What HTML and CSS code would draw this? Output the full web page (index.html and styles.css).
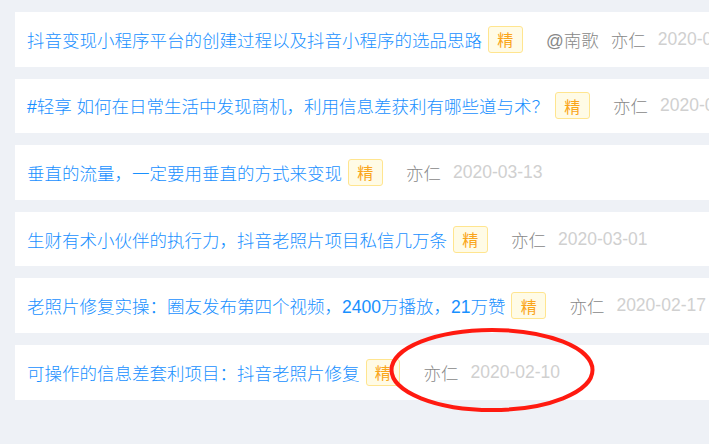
FILE: index.html
```html
<!DOCTYPE html>
<html lang="zh-CN">
<head>
    <meta charset="UTF-8">
    <meta name="viewport" content="width=device-width, initial-scale=1.0">
    <title>精华帖子</title>
    <link rel="stylesheet" href="styles.css">
</head>
<body>
    <div class="topic-list">
        <div class="topic">
            <a class="topic-title" href="#">抖音变现小程序平台的创建过程以及抖音小程序的选品思路</a>
            <span class="tag">精</span>
            <span class="author">@南歌</span>
            <span class="author">亦仁</span>
            <span class="date">2020-03-20</span>
        </div>
        <div class="topic">
            <a class="topic-title" href="#">#轻享 如何在日常生活中发现商机，利用信息差获利有哪些道与术？</a>
            <span class="tag">精</span>
            <span class="author">亦仁</span>
            <span class="date">2020-03-15</span>
        </div>
        <div class="topic">
            <a class="topic-title" href="#">垂直的流量，一定要用垂直的方式来变现</a>
            <span class="tag">精</span>
            <span class="author">亦仁</span>
            <span class="date">2020-03-13</span>
        </div>
        <div class="topic">
            <a class="topic-title" href="#">生财有术小伙伴的执行力，抖音老照片项目私信几万条</a>
            <span class="tag">精</span>
            <span class="author">亦仁</span>
            <span class="date">2020-03-01</span>
        </div>
        <div class="topic">
            <a class="topic-title" href="#">老照片修复实操：圈友发布第四个视频，2400万播放，21万赞</a>
            <span class="tag">精</span>
            <span class="author">亦仁</span>
            <span class="date">2020-02-17</span>
        </div>
        <div class="topic">
            <a class="topic-title" href="#">可操作的信息差套利项目：抖音老照片修复</a>
            <span class="tag">精</span>
            <span class="author">亦仁</span>
            <span class="date">2020-02-10</span>
        </div>
    </div>

    <!-- red marker drawn over the last row -->
    <svg class="marker" width="206" height="86" viewBox="0 0 206 86">
        <ellipse cx="103" cy="43" rx="100.5" ry="40" fill="none" stroke="#ff1a10" stroke-width="4"/>
    </svg>
</body>
</html>
```

FILE: styles.css
```css
body {
    margin: 0;
    padding: 0;
    background-color: #eef1f6;
    font-family: "Liberation Sans", "Noto Sans CJK SC", sans-serif;
    font-size: 17.5px;
    font-weight: 300;
    overflow: hidden;
    position: relative;
    height: 444px;
}
.topic-list {
    padding: 12px 0 0 15px;
    margin-right: -40px;
}
.topic {
    display: flex;
    align-items: center;
    height: 54.6px;
    margin-bottom: 12px;
    padding: 0 12px;
    background-color: #fff;
    white-space: nowrap;
}
.topic > * {
    flex-shrink: 0;
}
.topic-title {
    color: #1890ff;
    text-decoration: none;
}
.tag {
    display: flex;
    align-items: center;
    justify-content: center;
    box-sizing: border-box;
    width: 34.5px;
    height: 27px;
    margin-left: 6px;
    margin-right: 11.5px;
    font-size: 16px;
    font-weight: 400;
    color: #faa51a;
    background-color: #fffbe6;
    border: 1px solid #ffe58f;
    border-radius: 3px;
}
.author {
    margin-left: 12px;
    color: #888;
}
.date {
    margin-left: 12px;
    color: #d0d0d0;
}
.marker {
    position: absolute;
    left: 389px;
    top: 327px;
}
```
